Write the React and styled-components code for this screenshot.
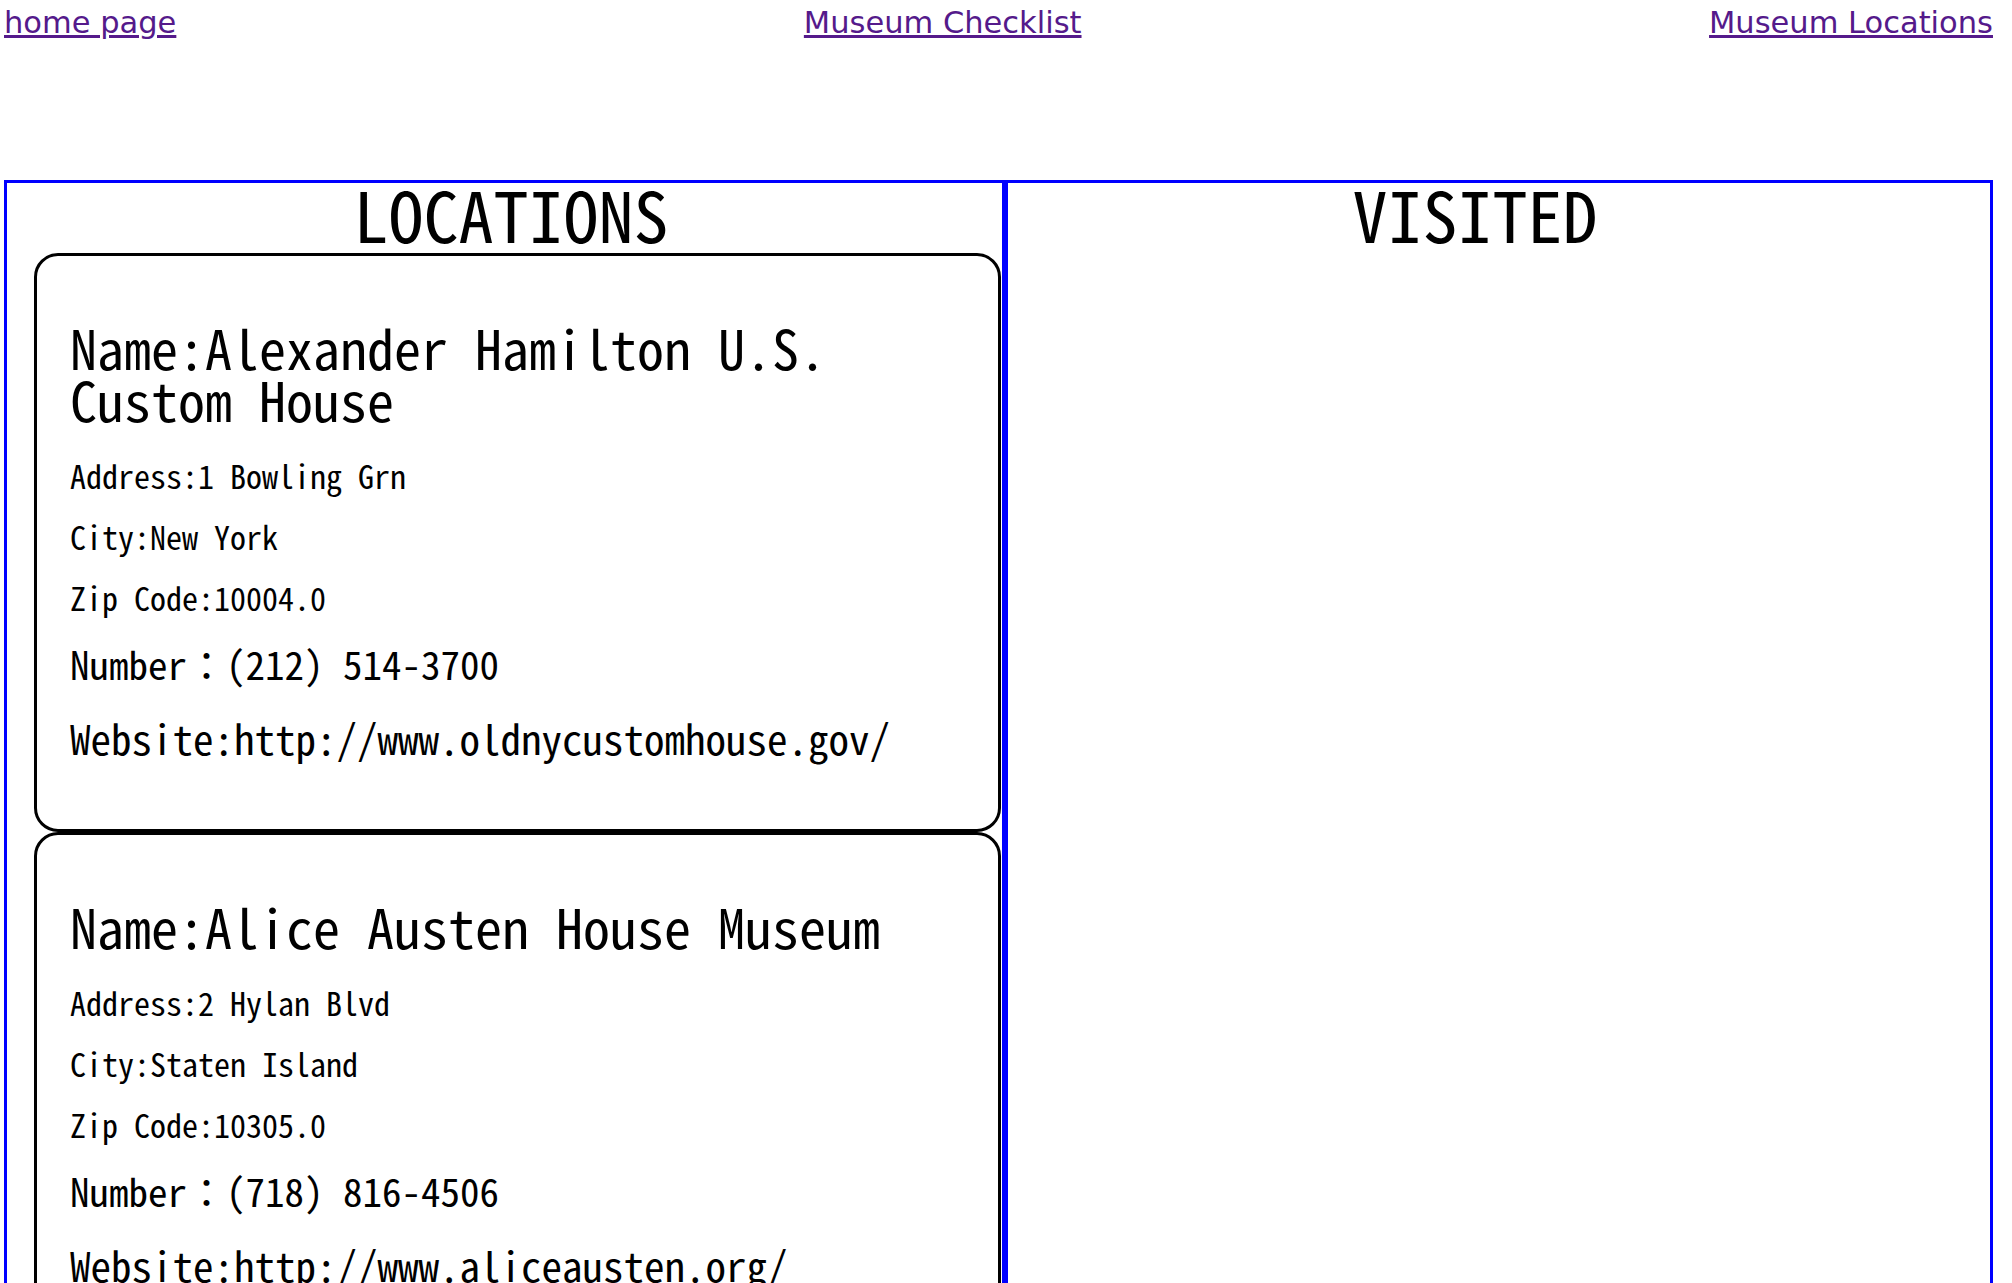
import React from 'react'
import styled, { createGlobalStyle } from 'styled-components'

const museums = [
  {
    name: 'Alexander Hamilton U.S. Custom House',
    address: '1 Bowling Grn',
    city: 'New York',
    zip: '10004.0',
    number: '(212) 514-3700',
    website: 'http://www.oldnycustomhouse.gov/',
  },
  {
    name: 'Alice Austen House Museum',
    address: '2 Hylan Blvd',
    city: 'Staten Island',
    zip: '10305.0',
    number: '(718) 816-4506',
    website: 'http://www.aliceausten.org/',
  },
]

function App() {
  return (
    <>
      <GlobalStyle />
      <Page>
        <Nav>
          <NavLink href='#home'>home page</NavLink>
          <NavLink href='#checklist'>Museum Checklist</NavLink>
          <NavLink href='#locations'>Museum Locations</NavLink>
        </Nav>

        <Board>
          <Column $width={1001}>
            <Heading $shift={13}>LOCATIONS</Heading>
            {museums.map((m) => (
              <Card key={m.name}>
                <Name>Name:{m.name}</Name>
                <Detail>Address:{m.address}</Detail>
                <Detail>City:{m.city}</Detail>
                <Detail>Zip Code:{m.zip}</Detail>
                <Contact $size={39} $lh={70}>Number：{m.number}</Contact>
                <Contact $size={41} $lh={79}>Website:{m.website}</Contact>
              </Card>
            ))}
          </Column>
          <Column $width={988}>
            <Heading $shift={-48}>VISITED</Heading>
          </Column>
        </Board>
      </Page>
    </>
  )
}

const GlobalStyle = createGlobalStyle`
  html, body {
    margin: 0;
    background: #fff;
  }
  ::-webkit-scrollbar {
    width: 5px;
  }
  ::-webkit-scrollbar-track {
    background: #f0f0f0;
  }
  ::-webkit-scrollbar-thumb {
    background: #c4c4c4;
  }
`

const Page = styled.div`
  padding: 5px 0 0 4px;
  font-family: "Noto Sans Mono CJK JP", "Noto Sans CJK JP", monospace;
  color: #000;
`

const Nav = styled.nav`
  display: flex;
  justify-content: space-between;
  width: 1989px;
`

const NavLink = styled.a`
  font-family: "DejaVu Sans", Verdana, sans-serif;
  font-size: 30.5px;
  color: #551a8b;
  text-decoration: underline;
`

const Board = styled.div`
  display: flex;
  align-items: stretch;
  width: 1989px;
  margin-top: 140px;
`

const Column = styled.section`
  box-sizing: border-box;
  width: ${(p) => p.$width}px;
  border: 3px solid #0000ff;
`

const Heading = styled.h1`
  margin: 0 0 10px;
  font-size: 70px;
  font-weight: 400;
  line-height: 60px;
  text-align: center;
  padding-left: ${(p) => Math.max(p.$shift, 0)}px;
  padding-right: ${(p) => Math.max(-p.$shift, 0)}px;
`

const Card = styled.div`
  box-sizing: border-box;
  width: 967px;
  margin-left: 27px;
  padding: 65px 35px 52px 33px;
  border: 3px solid #000;
  border-radius: 24px;
`

const Name = styled.h2`
  margin: 0 0 20px;
  font-size: 54px;
  font-weight: 400;
  line-height: 52px;
`

const Detail = styled.p`
  margin: 0;
  font-size: 32px;
  line-height: 61px;
`

const Contact = styled.p`
  margin: 0;
  font-size: ${(p) => p.$size}px;
  line-height: ${(p) => p.$lh}px;
`

export default App
